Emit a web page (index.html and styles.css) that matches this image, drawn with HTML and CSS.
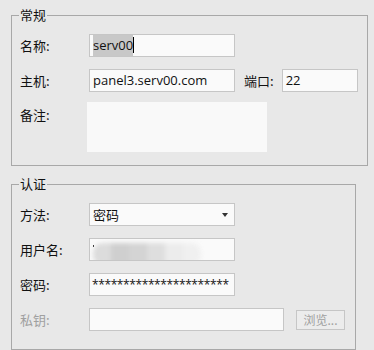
FILE: index.html
```html
<!DOCTYPE html>
<html lang="zh-CN">
<head>
  <meta charset="UTF-8">
  <title>会话设置</title>
  <link rel="stylesheet" href="styles.css">
</head>
<body>
  <fieldset class="group group-general">
    <legend>常规</legend>

    <div class="row">
      <label>名称:</label>
      <div class="field"><span class="sel">serv00</span><span class="caret"></span></div>
    </div>

    <div class="row">
      <label>主机:</label>
      <div class="field">panel3.serv00.com</div>
      <label class="port-label">端口:</label>
      <div class="field port">22</div>
    </div>

    <div class="row row-top">
      <label>备注:</label>
      <div class="memo"></div>
    </div>
  </fieldset>

  <fieldset class="group group-auth">
    <legend>认证</legend>

    <div class="row">
      <label>方法:</label>
      <div class="field select">密码<span class="arrow"></span></div>
    </div>

    <div class="row">
      <label>用户名:</label>
      <div class="field"><span class="cursor"></span><div class="blur"><i></i><i></i><i></i><i></i><i></i><i></i></div></div>
    </div>

    <div class="row">
      <label>密码:</label>
      <div class="field stars">**********************</div>
    </div>

    <div class="row disabled">
      <label>私钥:</label>
      <div class="field key"></div>
      <button type="button">浏览...</button>
    </div>
  </fieldset>
</body>
</html>
```

FILE: styles.css
```css
body {
  margin: 0;
  padding: 0 0 0 11px;
  background: #e8e8e8;
  font-family: "Noto Sans CJK SC", "Noto Sans", sans-serif;
  font-size: 12px;
  color: #111;
}

.group {
  margin: 0;
  border: 1px solid #a8a8a8;
  padding: 0 0 0 8px;
  box-sizing: border-box;
}

.group legend {
  padding: 0 1px;
  margin-left: -1px;
  font-size: 13px;
  line-height: 16px;
}

.group-general {
  width: 357px;
  margin-top: 7px;
  padding-top: 11px;
  padding-bottom: 13px;
}

.group-auth {
  width: 345px;
  margin-top: 10px;
  padding-top: 11px;
  padding-bottom: 18px;
}

.row {
  display: flex;
  align-items: center;
  margin-bottom: 12px;
}

.row:last-child {
  margin-bottom: 0;
}

.row-top {
  align-items: flex-start;
  margin-top: -2px;
}

.row label {
  width: 69px;
  flex: none;
  font-size: 13px;
}

.row-top label {
  padding-top: 3px;
}

.field {
  position: relative;
  width: 146px;
  height: 23px;
  box-sizing: border-box;
  border: 1px solid #c6c6c6;
  background: #fafafa;
  padding: 0 3px;
  font-family: "Open Sans", "Noto Sans CJK SC", sans-serif;
  font-size: 13px;
  line-height: 21px;
  white-space: nowrap;
  overflow: hidden;
}

.sel {
  background: #c8c8c8;
  padding: 2px 0;
}

.caret {
  display: inline-block;
  width: 1px;
  height: 16px;
  background: #000;
  vertical-align: -3px;
}

.port-label {
  width: auto !important;
  margin-left: 9px;
  margin-right: 8px;
}

.field.port {
  width: 76px;
}

.memo {
  width: 180px;
  height: 50px;
  margin-left: -2px;
  background: #f9f9f9;
}

.select {
  font-family: "Noto Sans CJK SC", sans-serif;
}

.arrow {
  position: absolute;
  right: 6px;
  top: 9px;
  border-left: 3px solid transparent;
  border-right: 3px solid transparent;
  border-top: 4px solid #333;
}

.cursor {
  position: absolute;
  left: 3px;
  top: 6px;
  width: 1px;
  height: 2px;
  background: #222;
}

.blur {
  position: absolute;
  left: 3px;
  top: 4px;
  width: 108px;
  height: 22px;
  display: flex;
  filter: blur(2px);
  border-radius: 10px;
  overflow: hidden;
}

.blur i {
  flex: 1;
  background: #dcdcdc;
}

.blur i:nth-child(2) { background: #cfcfcf; }
.blur i:nth-child(3) { background: #d4d4d4; }
.blur i:nth-child(4) { background: #dedede; }
.blur i:nth-child(5) { background: #ececec; }
.blur i:nth-child(6) { background: #f0f0f0; }

.stars {
  font-size: 12px;
  letter-spacing: -0.4px;
  padding-left: 2px;
}

.disabled label {
  color: #a0a0a0;
}

.field.key {
  width: 195px;
}

button {
  margin-left: 12px;
  width: 49px;
  height: 20px;
  padding: 0;
  border: 1px solid #c6c6c6;
  background: #ececec;
  color: #a0a0a0;
  font-family: "Noto Sans CJK SC", sans-serif;
  font-size: 12px;
  line-height: 18px;
}
```
